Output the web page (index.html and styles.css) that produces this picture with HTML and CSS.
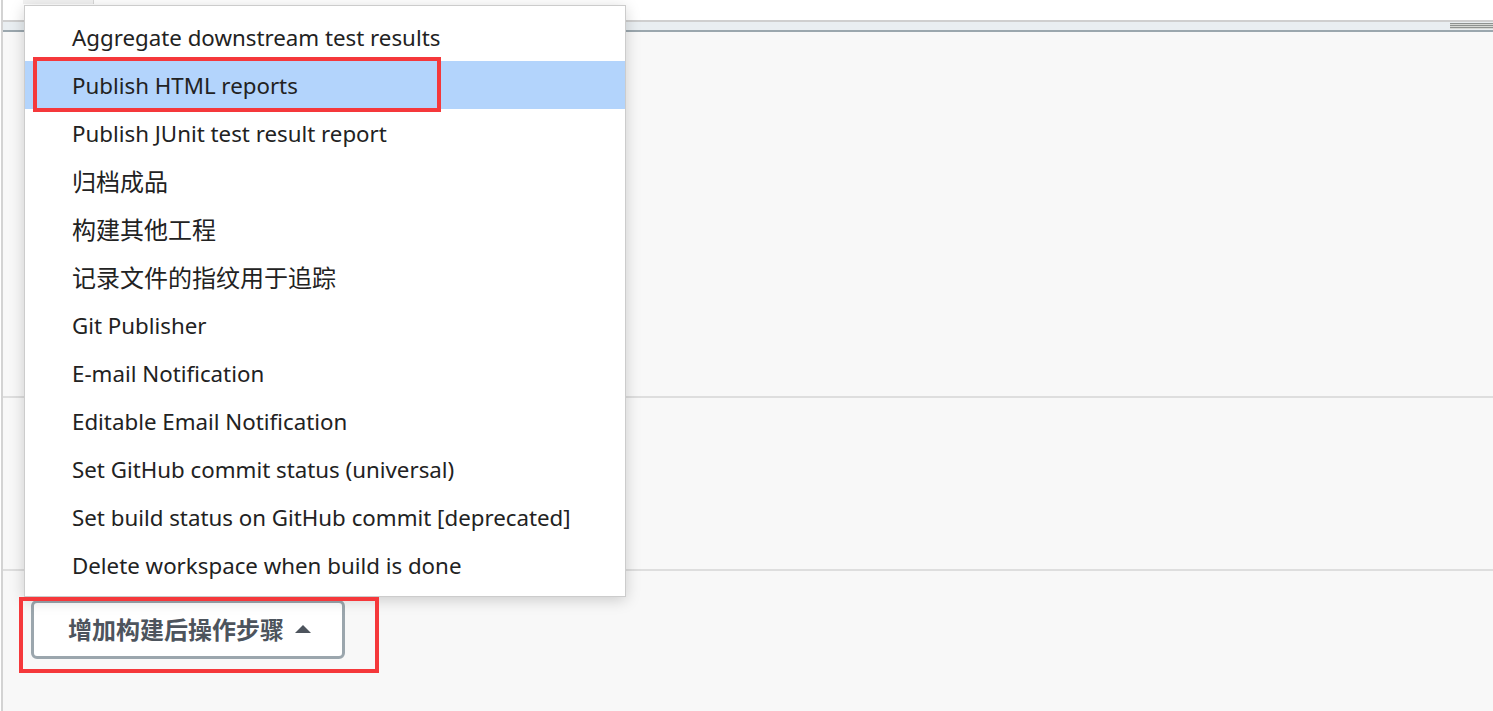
FILE: index.html
```html
<!DOCTYPE html>
<html lang="zh-CN">
<head>
    <meta charset="UTF-8">
    <title>构建后操作</title>
    <link rel="stylesheet" href="styles.css">
</head>
<body>
    <div class="page">
        <div class="top-strip">
            <span class="top-tab"></span>
        </div>
        <div class="header-bar">
            <span class="grip"></span>
        </div>
        <div class="section section-one"></div>
        <div class="section section-two"></div>
        <div class="section section-three">
            <button class="add-step">增加构建后操作步骤 <span class="caret"></span></button>
        </div>

        <!-- 下拉菜单 -->
        <ul class="step-menu">
            <li>Aggregate downstream test results</li>
            <li class="active">Publish HTML reports</li>
            <li>Publish JUnit test result report</li>
            <li class="cn">归档成品</li>
            <li class="cn">构建其他工程</li>
            <li class="cn">记录文件的指纹用于追踪</li>
            <li>Git Publisher</li>
            <li>E-mail Notification</li>
            <li>Editable Email Notification</li>
            <li>Set GitHub commit status (universal)</li>
            <li>Set build status on GitHub commit [deprecated]</li>
            <li>Delete workspace when build is done</li>
        </ul>

        <!-- 标注框 -->
        <div class="mark mark-item"></div>
        <div class="mark mark-button"></div>
    </div>
</body>
</html>
```

FILE: styles.css
```css
/* 基本背景 */
body {
    margin: 0;
    background-color: #ffffff;
    font-family: "Noto Sans", "Noto Sans CJK SC", sans-serif;
    color: #222222;
}

.page {
    position: relative;
    height: 711px;
    margin-left: 1px;
    border-left: 2px solid #d3d3d3;
    background-color: #f8f8f8;
    overflow: hidden;
}

.top-strip {
    height: 20px;
    background-color: #ffffff;
    position: relative;
}

.top-tab {
    position: absolute;
    left: 20px;
    top: 0;
    width: 70px;
    height: 4px;
    border-right: 1px solid #d8d8d8;
    background-color: #f2f2f2;
}

/* 顶部分隔条 */
.header-bar {
    height: 8px;
    border-top: 2px solid #cfcfcf;
    border-bottom: 2px solid #9ba7ae;
    background-color: #e9eef1;
    display: flex;
    justify-content: flex-end;
    align-items: center;
}

.grip {
    width: 43px;
    height: 6px;
    background: repeating-linear-gradient(to bottom, #8e9290 0, #8e9290 1px, #d6d8d4 1px, #d6d8d4 2px);
}

.section {
    border-bottom: 2px solid #dedede;
}

.section-one {
    height: 364px;
}

.section-two {
    height: 171px;
}

.section-three {
    border-bottom: none;
    padding: 29px 0 0 28px;
}

.add-step {
    display: flex;
    align-items: center;
    gap: 11px;
    height: 59px;
    padding: 0 31px 2px 34px;
    background-color: #ffffff;
    border: 3px solid #9ba6ad;
    border-radius: 6px;
    font-family: "Noto Sans CJK SC", "Noto Sans", sans-serif;
    font-weight: bold;
    font-size: 24px;
    color: #4d545d;
}

.caret {
    width: 0;
    height: 0;
    border-left: 8px solid transparent;
    border-right: 8px solid transparent;
    border-bottom: 8px solid #4d545d;
}

/* 下拉菜单 */
.step-menu {
    position: absolute;
    left: 21px;
    top: 5px;
    width: 600px;
    margin: 0;
    padding: 7px 0;
    list-style: none;
    background-color: #ffffff;
    border: 1px solid #cccccc;
    box-shadow: 0 3px 14px rgba(0, 0, 0, 0.18);
}

.step-menu li {
    height: 48px;
    line-height: 50px;
    padding-left: 47px;
    font-size: 22.3px;
    color: #222222;
    white-space: nowrap;
}

.step-menu li.cn {
    font-size: 24px;
}

.step-menu li.active {
    background-color: #b3d4fc;
}

/* 红色标注框 */
.mark {
    position: absolute;
    border: 4px solid #f5383b;
}

.mark-item {
    left: 30px;
    top: 57px;
    width: 400px;
    height: 47px;
}

.mark-button {
    left: 16px;
    top: 597px;
    width: 352px;
    height: 68px;
}
```
